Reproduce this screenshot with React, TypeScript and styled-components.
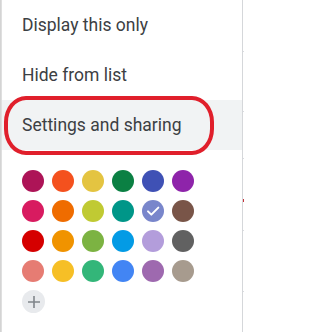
import React from "react";
import styled, { createGlobalStyle } from "styled-components";

const GlobalStyle = createGlobalStyle`
  html, body {
    margin: 0;
    padding: 0;
    background: #ffffff;
    overflow: hidden;
  }
  body {
    font-family: Roboto, "Liberation Sans", Arial, sans-serif;
  }
`;

const menuItems = ["Display this only", "Hide from list", "Settings and sharing"];

const colors = [
  "#ad1457", "#f4511e", "#e4c441", "#0b8043", "#3f51b5", "#8e24aa",
  "#d81b60", "#ef6c00", "#c0ca33", "#009688", "#7986cb", "#795548",
  "#d50000", "#f09300", "#7cb342", "#039be5", "#b39ddb", "#616161",
  "#e67c73", "#f6bf26", "#33b679", "#4285f4", "#9e69af", "#a79b8e",
];

const selectedColor = "#7986cb";

const Page = () => (
  <Screen>
    <ShadowEdge />
    <Menu>
      {menuItems.map((label, i) => (
        <MenuItem key={label} active={i === 2}>
          {label}
        </MenuItem>
      ))}
      <Palette>
        {colors.map((c) => (
          <Swatch key={c} color={c}>
            {c === selectedColor && (
              <svg width="16" height="16" viewBox="0 0 24 24">
                <path
                  d="M4.5 12.5l5 5L20 7"
                  fill="none"
                  stroke="#ffffff"
                  strokeWidth="3"
                  strokeLinecap="round"
                  strokeLinejoin="round"
                />
              </svg>
            )}
          </Swatch>
        ))}
        <AddButton>
          <svg width="14" height="14" viewBox="0 0 14 14">
            <path d="M7 1v12M1 7h12" stroke="#80868b" strokeWidth="1.6" />
          </svg>
        </AddButton>
      </Palette>
      <Annotation />
    </Menu>
    <CalendarEdge />
  </Screen>
);

export default function App() {
  return (
    <>
      <GlobalStyle />
      <Page />
    </>
  );
}

const Screen = styled.div`
  display: flex;
  width: 244px;
  height: 332px;
  overflow: hidden;
`;

const ShadowEdge = styled.div`
  width: 2px;
  flex-shrink: 0;
  background: linear-gradient(to right, #cfcfcf, #e4e4e4);
`;

const Menu = styled.div`
  position: relative;
  width: 240px;
  flex-shrink: 0;
  display: flex;
  flex-direction: column;
  background: #ffffff;
`;

const MenuItem = styled.div<{ active?: boolean }>`
  height: 50px;
  display: flex;
  align-items: center;
  padding-left: 20px;
  font-size: 17.5px;
  color: #3c4043;
  letter-spacing: 0;
  background: ${({ active }) => (active ? "#f1f3f4" : "transparent")};
`;

const Palette = styled.div`
  display: grid;
  grid-template-columns: repeat(6, 22px);
  grid-auto-rows: 22px;
  gap: 8px;
  padding: 20px 0 0 20px;
`;

const Swatch = styled.div<{ color: string }>`
  width: 22px;
  height: 22px;
  border-radius: 50%;
  background: ${({ color }) => color};
  display: flex;
  align-items: center;
  justify-content: center;
`;

const AddButton = styled.div`
  width: 23px;
  height: 23px;
  border-radius: 50%;
  background: #e8eaed;
  display: flex;
  align-items: center;
  justify-content: center;
`;

const Annotation = styled.div`
  position: absolute;
  left: 2px;
  top: 96px;
  width: 202px;
  height: 51px;
  border: 4px solid #e01f2b;
  border-radius: 22px / 26px;
  pointer-events: none;
`;

const CalendarEdge = styled.div`
  width: 2px;
  flex-shrink: 0;
  border-left: 1px solid #d5d7da;
  background: linear-gradient(
    to bottom,
    #ffffff 0 51px,
    #dadce0 51px 52px,
    #ffffff 52px 111px,
    #dadce0 111px 112px,
    #ffffff 112px 158px,
    #dadce0 158px 159px,
    #ffffff 159px 199px,
    #c5323a 199px 202px,
    #ffffff 202px 230px,
    #dadce0 230px 231px,
    #ffffff 231px 291px,
    #dadce0 291px 292px,
    #ffffff 292px
  );
`;
